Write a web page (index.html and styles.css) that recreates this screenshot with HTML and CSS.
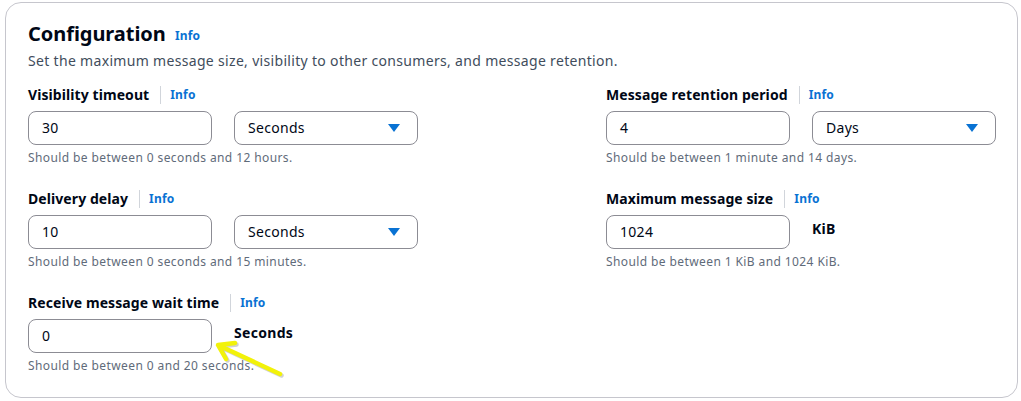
FILE: index.html
```html
<!DOCTYPE html>
<html lang="en">
<head>
	<meta charset="UTF-8">
	<title>Configuration</title>
	<link rel="stylesheet" href="styles.css">
</head>
<body>
	<div class="card">
		<div class="header">
			<h2>Configuration <a class="info big" href="">Info</a></h2>
			<p class="desc">Set the maximum message size, visibility to other consumers, and message retention.</p>
		</div>
		<div class="grid">
			<div class="col">
				<div class="field">
					<div class="label"><span>Visibility timeout</span><i class="sep"></i><a class="info" href="">Info</a></div>
					<div class="controls">
						<div class="input">30</div>
						<div class="select">Seconds<span class="caret"></span></div>
					</div>
					<div class="hint">Should be between 0 seconds and 12 hours.</div>
				</div>
				<div class="field">
					<div class="label"><span>Delivery delay</span><i class="sep"></i><a class="info" href="">Info</a></div>
					<div class="controls">
						<div class="input">10</div>
						<div class="select">Seconds<span class="caret"></span></div>
					</div>
					<div class="hint">Should be between 0 seconds and 15 minutes.</div>
				</div>
				<div class="field">
					<div class="label"><span>Receive message wait time</span><i class="sep"></i><a class="info" href="">Info</a></div>
					<div class="controls">
						<div class="input">0</div>
						<div class="unit">Seconds</div>
					</div>
					<div class="hint">Should be between 0 and 20 seconds.</div>
				</div>
			</div>
			<div class="col">
				<div class="field">
					<div class="label"><span>Message retention period</span><i class="sep"></i><a class="info" href="">Info</a></div>
					<div class="controls">
						<div class="input">4</div>
						<div class="select">Days<span class="caret"></span></div>
					</div>
					<div class="hint">Should be between 1 minute and 14 days.</div>
				</div>
				<div class="field">
					<div class="label"><span>Maximum message size</span><i class="sep"></i><a class="info" href="">Info</a></div>
					<div class="controls">
						<div class="input">1024</div>
						<div class="unit">KiB</div>
					</div>
					<div class="hint">Should be between 1 KiB and 1024 KiB.</div>
				</div>
			</div>
		</div>
	</div>

	<!-- yellow pointer drawn over the wait time input -->
	<svg class="arrow" width="80" height="50" viewBox="0 0 80 50">
		<g fill="none" stroke="#999" stroke-opacity=".45" stroke-width="4.5" stroke-linecap="round" stroke-linejoin="round" transform="translate(1.5,1.5)">
			<path d="M65 35 L5 7"/>
			<path d="M20 4 L3 6 L11 20"/>
		</g>
		<g fill="none" stroke="#f2f20a" stroke-width="4.5" stroke-linecap="round" stroke-linejoin="round">
			<path d="M65 35 L5 7"/>
			<path d="M20 4 L3 6 L11 20"/>
		</g>
	</svg>
</body>
</html>
```

FILE: styles.css
```css
*{
	margin: 0;
	padding: 0;
	box-sizing: border-box;
}
a{
	text-decoration: none;
}
body{
	font-family: "Noto Sans", "Open Sans", sans-serif;
	color: #000716;
	background: #fff;
	position: relative;
}
.card{
	margin: 2px 3px 0 5px;
	height: 396px;
	border: 1px solid #c6c6cd;
	border-radius: 16px;
	padding: 19px 22px 0 22px;
}
.header h2{
	font-size: 20px;
	line-height: 24px;
	font-weight: 700;
	letter-spacing: -0.05px;
}
.info{
	color: #0972d3;
	font-size: 12px;
	font-weight: 700;
	letter-spacing: 0.2px;
}
.info.big{
	margin-left: 4px;
	vertical-align: 1px;
}
.desc{
	font-size: 14px;
	line-height: 20px;
	color: #414d5c;
	margin-top: 3px;
	letter-spacing: 0.32px;
}
.grid{
	display: grid;
	grid-template-columns: 578px 1fr;
	margin-top: 14px;
}
.col{
	display: flex;
	flex-direction: column;
	gap: 23px;
}
.label{
	display: flex;
	align-items: center;
	font-size: 14px;
	line-height: 20px;
	font-weight: 700;
	letter-spacing: 0.08px;
}
.sep{
	width: 1px;
	height: 18px;
	background: #d1d5db;
	margin: 0 9px 0 11px;
}
.controls{
	display: flex;
	gap: 22px;
	margin-top: 6px;
}
.input, .select{
	width: 184px;
	height: 34px;
	border: 1px solid #8c8c94;
	border-radius: 8px;
	padding: 0 13px;
	font-size: 14px;
	line-height: 32px;
	letter-spacing: 0.3px;
}
.select{
	display: flex;
	justify-content: space-between;
	align-items: center;
}
.caret{
	width: 0;
	height: 0;
	border-left: 6px solid transparent;
	border-right: 6px solid transparent;
	border-top: 8px solid #0972d3;
	margin-right: 4px;
}
.unit{
	font-size: 14px;
	font-weight: 700;
	line-height: 20px;
	margin-top: 4px;
	letter-spacing: 0.3px;
}
.hint{
	font-size: 12px;
	line-height: 16px;
	color: #5f6b7a;
	margin-top: 5px;
	letter-spacing: 0.4px;
}
.arrow{
	position: absolute;
	left: 215px;
	top: 339px;
}
```
